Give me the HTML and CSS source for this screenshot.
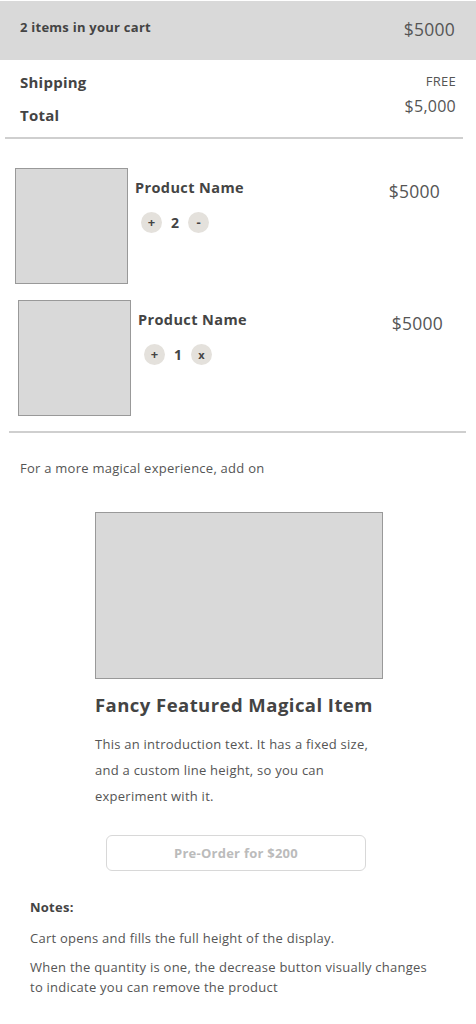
FILE: index.html
```html
<!DOCTYPE html>
<html>
<head>
<meta charset="utf-8">
<link rel="stylesheet" href="styles.css">
</head>
<body>
<div class="cart">
  <header class="cart-head">
    <span class="head-count">2 items in your cart</span>
    <span class="head-price">$5000</span>
  </header>
  <section class="summary">
    <div class="sum-labels">
      <div class="sum-label">Shipping</div>
      <div class="sum-label">Total</div>
    </div>
    <div class="sum-values">
      <div class="sum-free">FREE</div>
      <div class="sum-total">$5,000</div>
    </div>
  </section>
  <hr class="rule rule-top">
  <section class="items">
    <div class="item item-a">
      <div class="thumb"></div>
      <div class="item-info">
        <div class="item-name">Product Name</div>
        <div class="qty">
          <span class="qbtn">+</span>
          <span class="qnum">2</span>
          <span class="qbtn">-</span>
        </div>
      </div>
      <div class="item-price">$5000</div>
    </div>
    <div class="item item-b">
      <div class="thumb"></div>
      <div class="item-info">
        <div class="item-name">Product Name</div>
        <div class="qty">
          <span class="qbtn">+</span>
          <span class="qnum">1</span>
          <span class="qbtn qx">x</span>
        </div>
      </div>
      <div class="item-price">$5000</div>
    </div>
  </section>
  <hr class="rule rule-bottom">
  <p class="addon">For a more magical experience, add on</p>
  <section class="feature">
    <div class="feature-img"></div>
    <h2 class="feature-title">Fancy Featured Magical Item</h2>
    <p class="feature-text">This an introduction text. It has a fixed size, and a custom line height, so you can experiment with it.</p>
    <div class="feature-btn">Pre-Order for $200</div>
  </section>
  <section class="notes">
    <div class="notes-title">Notes:</div>
    <p class="note">Cart opens and fills the full height of the display.</p>
    <p class="note">When the quantity is one, the decrease button visually changes to indicate you can remove the product</p>
  </section>
</div>
</body>
</html>
```
FILE: styles.css
```css
* { box-sizing: border-box; }
html, body { margin: 0; padding: 0; background: #fff; }
body {
  font-family: "Open Sans", Lato, sans-serif;
  color: #555;
  width: 476px;
  letter-spacing: 0.25px;
}
.cart-head {
  background: #d9d9d9;
  height: 59px;
  margin-top: 1px;
  display: flex;
  justify-content: space-between;
  align-items: flex-start;
  padding: 16px 21px 0 20px;
}
.head-count { font-size: 13px; font-weight: 700; color: #444; line-height: 20px; }
.head-price { font-size: 17.5px; color: #555; line-height: 26px; margin-top: -1px; }
.summary {
  display: flex;
  justify-content: space-between;
  padding: 6px 20px 0 20px;
  height: 77px;
}
.sum-label { font-size: 15px; font-weight: 700; color: #444; line-height: 33px; }
.sum-values { text-align: right; padding-top: 5px; }
.sum-free { font-size: 13px; color: #555; line-height: 20px; }
.sum-total { font-size: 16px; color: #555; line-height: 26px; margin-top: 2px; }
.rule {
  border: 0;
  height: 2px;
  background: #cfcfcf;
  margin: 0;
}
.rule-top { margin-left: 5px; width: 458px; }
.rule-bottom { margin-left: 9px; width: 457px; }
.items { padding-top: 29px; padding-bottom: 15px; }
.item { display: flex; align-items: flex-start; }
.item-a { padding-left: 15px; padding-right: 36px; }
.item-b { padding-left: 18px; padding-right: 33px; margin-top: 16px; }
.thumb {
  width: 113px;
  height: 116px;
  background: #d9d9d9;
  border: 1px solid #999;
  flex: none;
}
.item-info { flex: 1; padding-left: 7px; padding-top: 10px; }
.item-name { font-size: 14.5px; font-weight: 700; color: #444; line-height: 20px; letter-spacing: 0.4px; }
.qty { display: flex; align-items: center; margin-top: 14px; padding-left: 6px; }
.qbtn {
  width: 21px; height: 21px;
  border-radius: 50%;
  background: #e4e1dc;
  color: #444;
  font-size: 13px;
  font-weight: 700;
  display: flex; align-items: center; justify-content: center;
  line-height: 1;
  letter-spacing: 0;
}
.qx { font-size: 11px; }
.qnum { font-size: 14px; font-weight: 700; color: #444; width: 26px; text-align: center; letter-spacing: 0; }
.item-price { font-size: 17.5px; color: #555; padding-top: 11px; line-height: 24px; }
.addon { margin: 0; padding: 26px 20px 0 20px; font-size: 13px; color: #555; line-height: 18px; }
.feature { padding: 35px 0 0 95px; }
.feature-img { width: 288px; height: 167px; background: #d9d9d9; border: 1px solid #999; }
.feature-title { margin: 13px 0 0 0; font-size: 18.5px; font-weight: 700; color: #444; line-height: 26px; letter-spacing: 0.45px; }
.feature-text { margin: 13px 0 0 0; font-size: 13px; line-height: 26px; width: 290px; color: #555; }
.feature-btn {
  margin: 26px 0 0 11px;
  width: 260px; height: 36px;
  border: 1px solid #d8d8d8;
  border-radius: 6px;
  display: flex; align-items: center; justify-content: center;
  font-size: 13px; font-weight: 700; color: #bbb;
}
.notes { padding: 27px 36px 0 30px; }
.notes-title { font-size: 13px; font-weight: 700; color: #444; line-height: 18px; }
.note { margin: 12px 0 0 0; font-size: 13px; line-height: 20px; color: #555; }
.note + .note { margin-top: 9px; }
```
